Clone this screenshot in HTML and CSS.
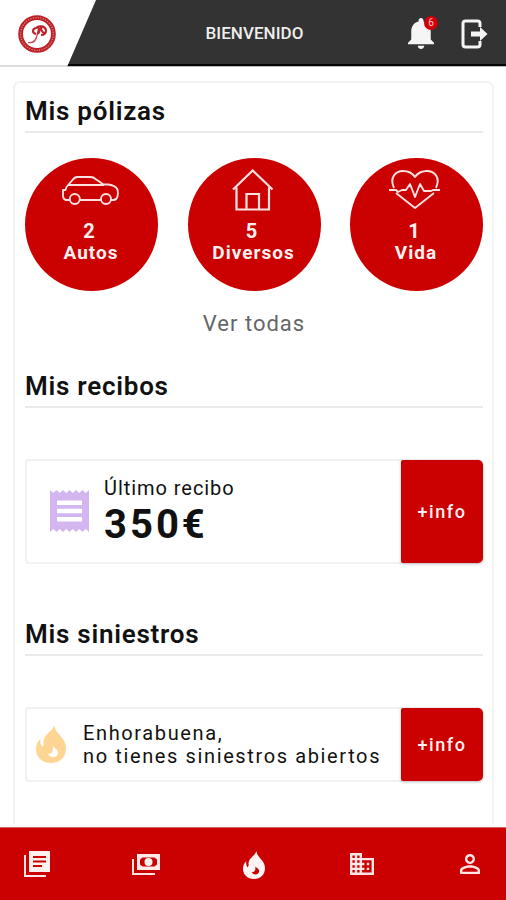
FILE: index.html
```html
<!DOCTYPE html>
<html lang="es">
<head>
<meta charset="utf-8">
<title>Bienvenido</title>
<link rel="stylesheet" href="styles.css">
</head>
<body>
<div class="app">
  <header class="header">
    <div class="brand">
      <svg class="logo" viewBox="0 0 40 40">
        <circle cx="20" cy="20" r="16.400" fill="#fff" stroke="#bd2027" stroke-width="4.800"/>
        <circle cx="20" cy="20" r="16.400" fill="none" stroke="#d97f7f" stroke-width="1.400" stroke-dasharray="1.200 1.300"/>
        <path d="M11 28.500c5 1 8-2 9-7l1.500-7" fill="none" stroke="#c8474b" stroke-width="1.300"/>
        <path d="M19 20c-4-1-4-5 0-6 3-3 9-2 10 2 0 3-2 5-5 5M21 13c2 3 2 4 0 7M24 13c0 3 1 5 3 6" fill="none" stroke="#bd2027" stroke-width="2.100"/>
      </svg>
    </div>
    <h1 class="title">BIENVENIDO</h1>
    <div class="actions">
      <div class="bell">
        <svg class="bell-icon" viewBox="4 2.5 16 19.5" preserveAspectRatio="none"><path fill="#f5f5f5" d="M12 22c1.100 0 2-.9 2-2h-4c0 1.100.89 2 2 2zm6-6v-5c0-3.070-1.640-5.640-4.500-6.320V4c0-.83-.67-1.500-1.500-1.500s-1.500.67-1.500 1.500v.68C7.630 5.360 6 7.920 6 11v5l-2 2v1h16v-1l-2-2z"/></svg>
        <span class="badge">6</span>
      </div>
      <svg class="exit" viewBox="0 0 27 30"><path d="M19 8V4.500Q19 2 16.500 2H4.500Q2 2 2 4.500v21Q2 28 4.500 28h12q2.500 0 2.500-2.500V22" fill="none" stroke="#f5f5f5" stroke-width="3"/><path d="M10 12.500h9V8l7.500 7-7.500 7v-4.500h-9z" fill="#f5f5f5"/></svg>
    </div>
  </header>

  <main class="panel">
    <h2 class="heading">Mis pólizas</h2>
    <div class="policies">
      <div class="policy">
        <svg class="icon" viewBox="0 0 60 42"><g fill="none" stroke="#ffe1e1" stroke-width="1.900" stroke-linejoin="round"><path d="M9.500 31H6q-3-1-3-4v-6h2.500l1-3 6-7q2-3 5-3h13q3 0 5 2l8 5.500h5q7 1 9 5 1 4 0 7-1 3.500-4 3.500h-2.500M20 31h21M8 16h36"/><circle cx="14.800" cy="30" r="5"/><circle cx="46" cy="30" r="5"/></g></svg>
        <span class="count">2</span><span class="name">Autos</span>
      </div>
      <div class="policy">
        <svg class="icon" viewBox="0 0 60 42"><g fill="none" stroke="#ffe1e1" stroke-width="2.200"><path d="M13.500 18.500v22h32.500v-22M10 20.500L29.700 1.500 49.500 20.500M23.500 40V25h12.500v15"/></g></svg>
        <span class="count">5</span><span class="name">Diversos</span>
      </div>
      <div class="policy">
        <svg class="icon" viewBox="0 0 60 42"><g fill="none" stroke="#ffe1e1" stroke-width="1.900" stroke-linejoin="round"><path d="M9 19C4 8 11 2 18 2q8 0 12 6 4-6 12-6c7 0 14 6 9 17M11 24l19 15 19-15"/><path d="M4 21h7l2 2 4-2h4l4-6 5 13 5-13 4 7h7l2-1h7"/></g></svg>
        <span class="count">1</span><span class="name">Vida</span>
      </div>
    </div>
    <a class="all">Ver todas</a>

    <h2 class="heading">Mis recibos</h2>
    <section class="card receipt">
      <svg class="receipt-icon" viewBox="0 0 39 42"><path fill="#d3b5ef" d="M0 0l3.250 3L6.500 0l3.250 3L13 0l3.250 3L19.500 0l3.250 3L26 0l3.250 3L32.500 0l3.250 3L39 0v42l-3.250-3-3.250 3-3.250-3L26 42l-3.250-3-3.250 3-3.250-3L13 42l-3.250-3-3.250 3-3.250-3L0 42z"/><path d="M7 12.800h25M7 21h25M7 29.200h25" stroke="#fff" stroke-width="4.600"/></svg>
      <div class="info">
        <span class="label">Último recibo</span>
        <strong class="amount">350€</strong>
      </div>
      <div class="more">+info</div>
    </section>

    <h2 class="heading">Mis siniestros</h2>
    <section class="card claim">
      <svg class="flame" viewBox="0 0 30 38"><path fill="#ffd594" d="M18.500 0c-.5 8 11.500 12 11.500 23 0 9-6 15-15 15S0 32 0 24c0-4 1.500-7.500 4.500-10-.5 3 0 5.500 1.500 8 1.500-1 2-2.500 1.500-5C8 9 15 8 18.500 0z"/><path d="M16.500 19c-.5 4 5.500 4 5.500 8.500 0 2.500-2 4.500-5 4.500-2 0-4-1-5-3 4 0 6-3 4.500-10z" fill="#fff"/></svg>
      <p class="message">Enhorabuena,<br>no tienes siniestros abiertos</p>
      <div class="more">+info</div>
    </section>
  </main>

  <nav class="nav">
    <svg class="n-doc" viewBox="0 0 26 26"><path d="M1 4v21h21" fill="none" stroke="#ffe4e4" stroke-width="2"/><path d="M5 0h21v21H5z" fill="#fff0f0"/><path d="M9 6h13M9 10.500h13M9 15h9" stroke="#cb0000" stroke-width="2"/></svg>
    <svg class="n-cash" viewBox="0 0 28 21"><path d="M1 5v15h22" fill="none" stroke="#ffe4e4" stroke-width="2"/><path d="M5 0h23v16H5z" fill="#ffe9e9"/><path d="M10.500 3.500h12l2.500 2v5l-2.500 2h-12L8 10.500v-5z" fill="#cb0000"/><circle cx="16.500" cy="8" r="4" fill="#fff0f0"/></svg>
    <svg class="n-fire" viewBox="0 0 30 38"><path fill="#fff3f3" d="M18.500 0c-.5 8 11.500 12 11.500 23 0 9-6 15-15 15S0 32 0 24c0-4 1.500-7.500 4.500-10-.5 3 0 5.500 1.500 8 1.500-1 2-2.500 1.500-5C8 9 15 8 18.500 0z"/><path d="M16.500 19c-.5 4 5.500 4 5.500 8.500 0 2.500-2 4.500-5 4.500-2 0-4-1-5-3 4 0 6-3 4.500-10z" fill="#cb0000"/></svg>
    <svg class="n-office" viewBox="2 3 20 18" preserveAspectRatio="none"><path fill="#ffe5e5" d="M12 7V3H2v18h20V7H12zM6 19H4v-2h2v2zm0-4H4v-2h2v2zm0-4H4V9h2v2zm0-4H4V5h2v2zm4 12H8v-2h2v2zm0-4H8v-2h2v2zm0-4H8V9h2v2zm0-4H8V5h2v2zm10 12h-8v-2h2v-2h-2v-2h2v-2h-2V9h8v10zm-2-8h-2v2h2v-2zm0 4h-2v2h2v-2z"/></svg>
    <svg class="n-user" viewBox="4 4 16 16" preserveAspectRatio="none"><path fill="#ffe5e5" d="M12 5.900c1.160 0 2.100.94 2.100 2.100s-.94 2.100-2.100 2.100S9.900 9.160 9.900 8s.94-2.100 2.100-2.100m0 9c2.970 0 6.100 1.460 6.100 2.100v1.100H5.900V17c0-.64 3.130-2.100 6.100-2.100M12 4C9.790 4 8 5.790 8 8s1.790 4 4 4 4-1.790 4-4-1.790-4-4-4zm0 9c-2.670 0-8 1.340-8 4v3h16v-3c0-2.660-5.330-4-8-4z"/></svg>
  </nav>
</div>
</body>
</html>
```
FILE: styles.css
```css
* { box-sizing: border-box; }
body { margin: 0; background: #fff; color: #111; font-family: Roboto, sans-serif; }
h1, h2, p { margin: 0; }
svg { display: block; flex: none; }
.app { height: 900px; display: flex; flex-direction: column; overflow: hidden; }

.header {
  height: 67px; flex: none;
  display: grid; grid-template-columns: 97px 1fr 97px; align-items: center;
  background: linear-gradient(#333 0 64px, #050505 64px 66px, #bbb 66px);
}
.brand {
  height: 67px; padding: 14px 0 0 17px; background: linear-gradient(#fff 65px, #ddd 65px);
  clip-path: polygon(0 0, 96px 0, 67px 67px, 0 67px);
}
.logo { width: 40px; height: 40px; }
.title { color: #eee; font-size: 17px; font-weight: 500; line-height: 20px; letter-spacing: .05px; text-align: center; padding: 0 0 1px 3px; }
.actions { display: flex; align-items: center; gap: 27px; }
.bell { position: relative; width: 26px; margin-left: -1px; }
.bell-icon { width: 26px; height: 31px; }
.badge {
  position: absolute; left: 16px; top: -2px; width: 14px; height: 14px; border-radius: 50%;
  background: #cf0008; color: #ffcaca; font-size: 10px; line-height: 14px; text-align: center;
}
.exit { width: 27px; height: 30px; }

.panel {
  height: 743px; flex: none; margin: 14px 12px 0 13px; padding: 15px 9px 0 10px;
  border: 2px solid #f3f3f3; border-bottom: 0; border-radius: 7px 7px 0 0;
}
.heading {
  height: 35px; border-bottom: 2px solid #e9e9e9;
  font-size: 26px; font-weight: 600; line-height: 26px; letter-spacing: .75px;
}
.policies { display: flex; justify-content: space-between; margin-top: 25px; }
.policy {
  width: 133px; height: 133px; border-radius: 50%; background: #cb0000; color: #fff0f0;
  display: flex; flex-direction: column; align-items: center; padding-top: 11px;
}
.icon { width: 60px; height: 42px; margin-left: -3px; }
.count { font-size: 20px; font-weight: 700; line-height: 21px; margin-top: 10px; margin-right: 5px; }
.name { font-size: 19px; font-weight: 700; line-height: 21px; letter-spacing: 1px; margin-right: 1px; }
.all { display: block; height: 82px; padding-top: 20px; text-align: center; color: #666; font-size: 22px; line-height: 26px; letter-spacing: 1px; }

.card { display: flex; align-items: stretch; border: 2px solid #f2f2f2; border-right: 0; border-radius: 4px; }
.receipt { height: 105px; margin: 51px 0 57px; }
.receipt-icon { width: 39px; height: 42px; margin: 29px 15px 0 23px; }
.info { flex: 1; padding-top: 15px; }
.label { display: block; font-size: 20px; line-height: 24px; letter-spacing: .95px; }
.amount { display: block; font-size: 40px; font-weight: 700; line-height: 49px; letter-spacing: 3px; }
.more {
  width: 82px; margin: -1px 0; border-radius: 2px 5px 5px 2px; background: #cb0000; color: #fff0f0;
  display: flex; align-items: center; justify-content: center;
  font-size: 18px; font-weight: 500; letter-spacing: 1.600px; box-shadow: 0 1px 3px #bbb;
}
.claim { height: 75px; margin-top: 51px; }
.flame { width: 30px; height: 38px; margin: 16px 17px 0 9px; }
.message { flex: 1; padding-top: 13px; font-size: 20px; line-height: 23px; letter-spacing: 1.620px; white-space: nowrap; }

.nav {
  height: 73px; flex: none; margin-top: 3px; padding: 0 26px 0 24px; border-top: 1px solid #c66;
  background: #cb0000; display: flex; align-items: center;
}
.n-doc { width: 26px; height: 26px; }
.n-cash { width: 28px; height: 21px; margin-left: 82px; }
.n-fire { width: 22px; height: 28px; margin: 2px 0 0 83px; }
.n-office { width: 24px; height: 22px; margin-left: 85px; }
.n-user { width: 20px; height: 20px; margin-left: 86px; }
```
